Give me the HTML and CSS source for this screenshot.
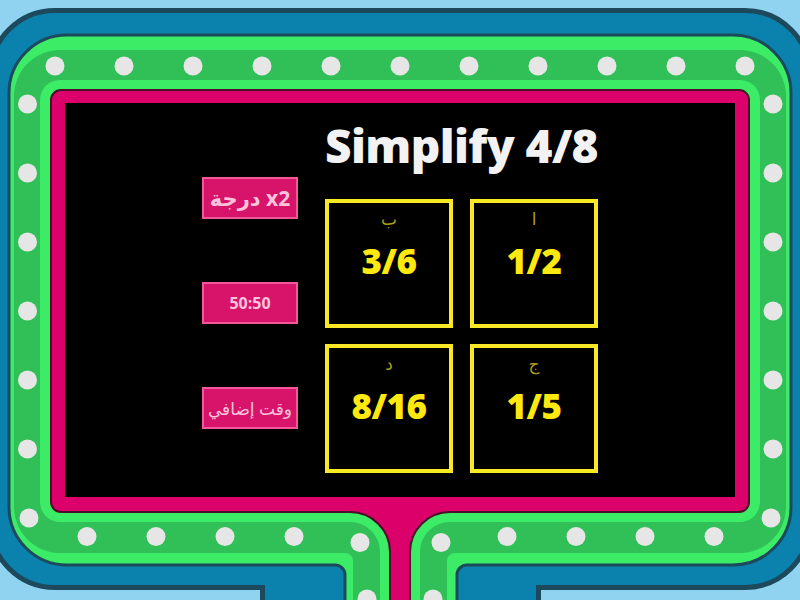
FILE: index.html
```html
<!DOCTYPE html>
<html lang="ar">
<head>
<meta charset="utf-8">
<title>Simplify 4/8</title>
<link rel="stylesheet" href="styles.css">
</head>
<body>
<div class="stage">
  <svg class="frame" viewBox="0 0 800 600" width="800" height="600" aria-hidden="true">
    <rect x="0" y="0" width="800" height="600" fill="#8fd3f1"/>
    <rect x="-10" y="10.5" width="820" height="577" rx="65" fill="#0b82ad" stroke="#1c4a5c" stroke-width="5"/>
    <rect x="262.5" y="587.5" width="276" height="40" fill="#0b82ad" stroke="#1c4a5c" stroke-width="5"/>
    <rect x="265" y="575" width="271" height="40" fill="#0b82ad"/>
    <path d="M67,35 H733 A58,58 0 0 1 791,93 V507 A58,58 0 0 1 733,565 H467 A10,10 0 0 0 457,575 V620 H345 V575 A10,10 0 0 0 335,565 H67 A58,58 0 0 1 9,507 V93 A58,58 0 0 1 67,35 Z" fill="#3cec67" stroke="#1c4a5c" stroke-width="3"/>
    <path d="M60,50 H740 A46,46 0 0 1 786,96 V507 A46,46 0 0 1 740,553 H455 A8,8 0 0 0 447,561 V620 H353 V561 A8,8 0 0 0 345,553 H60 A46,46 0 0 1 14,507 V96 A46,46 0 0 1 60,50 Z" fill="#31bf57"/>
    <path d="M60,80 H740 A20,20 0 0 1 760,100 V502 A20,20 0 0 1 740,522 H450 A30,30 0 0 0 420,552 V620 H380 V552 A30,30 0 0 0 350,522 H60 A20,20 0 0 1 40,502 V100 A20,20 0 0 1 60,80 Z" fill="#3cec67"/>
    <path d="M61,90 H739 A10,10 0 0 1 749,100 V502 A10,10 0 0 1 739,512 H450 A40,40 0 0 0 410,552 V620 H390 V552 A40,40 0 0 0 350,512 H61 A10,10 0 0 1 51,502 V100 A10,10 0 0 1 61,90 Z" fill="#dc006a" stroke="#4a1028" stroke-width="2"/>
    <rect x="65" y="103" width="670" height="394" fill="#000"/>
    <g fill="#e6e6e6">
      <circle cx="55" cy="66" r="9.5"/><circle cx="124" cy="66" r="9.5"/><circle cx="193" cy="66" r="9.5"/>
      <circle cx="262" cy="66" r="9.5"/><circle cx="331" cy="66" r="9.5"/><circle cx="400" cy="66" r="9.5"/>
      <circle cx="469" cy="66" r="9.5"/><circle cx="538" cy="66" r="9.5"/><circle cx="607" cy="66" r="9.5"/>
      <circle cx="676" cy="66" r="9.5"/><circle cx="745" cy="66" r="9.5"/>
      <circle cx="27.5" cy="104" r="9.5"/><circle cx="27.5" cy="173" r="9.5"/><circle cx="27.5" cy="242" r="9.5"/>
      <circle cx="27.5" cy="311" r="9.5"/><circle cx="27.5" cy="380" r="9.5"/><circle cx="27.5" cy="449" r="9.5"/>
      <circle cx="29" cy="518" r="9.5"/>
      <circle cx="773" cy="104" r="9.5"/><circle cx="773" cy="173" r="9.5"/><circle cx="773" cy="242" r="9.5"/>
      <circle cx="773" cy="311" r="9.5"/><circle cx="773" cy="380" r="9.5"/><circle cx="773" cy="449" r="9.5"/>
      <circle cx="771" cy="518" r="9.5"/>
      <circle cx="87" cy="536.5" r="9.5"/><circle cx="156" cy="536.5" r="9.5"/><circle cx="225" cy="536.5" r="9.5"/>
      <circle cx="294" cy="536.5" r="9.5"/><circle cx="360" cy="542.5" r="9.5"/><circle cx="367" cy="599" r="9.5"/>
      <circle cx="507" cy="536.5" r="9.5"/><circle cx="576" cy="536.5" r="9.5"/><circle cx="645" cy="536.5" r="9.5"/>
      <circle cx="714" cy="536.5" r="9.5"/><circle cx="441" cy="542.5" r="9.5"/><circle cx="433" cy="599" r="9.5"/>
    </g>
  </svg>
  <div class="content">
    <div class="lifelines">
      <div class="lifeline lifeline-big" dir="rtl">x2 درجة</div>
      <div class="lifeline lifeline-small">50:50</div>
      <div class="lifeline lifeline-mid" dir="rtl">وقت إضافي</div>
    </div>
    <div class="main">
      <h1 class="title">Simplify 4/8</h1>
      <div class="answers">
        <div class="answer"><span class="label">ب</span><span class="value">3/6</span></div>
        <div class="answer"><span class="label">ا</span><span class="value">1/2</span></div>
        <div class="answer"><span class="label">د</span><span class="value">8/16</span></div>
        <div class="answer"><span class="label">ج</span><span class="value">1/5</span></div>
      </div>
    </div>
  </div>
</div>
</body>
</html>
```

FILE: styles.css
```css
body {
  margin: 0;
  background: #8fd3f1;
}

.stage {
  display: grid;
  width: 800px;
  height: 600px;
  overflow: hidden;
}

.frame,
.content {
  grid-area: 1 / 1;
}

.frame {
  display: block;
}

.content {
  display: flex;
  align-items: flex-start;
  padding-left: 202px;
}

.lifelines {
  display: flex;
  flex-direction: column;
  gap: 63px;
  padding-top: 177px;
}

.lifeline {
  box-sizing: border-box;
  width: 96px;
  height: 42px;
  border: 2px solid #f2589a;
  background: #d7136a;
  color: #ffc3dc;
  display: flex;
  align-items: center;
  justify-content: center;
  font-family: "Open Sans", "DejaVu Sans", sans-serif;
  white-space: nowrap;
}

.lifeline-big {
  font-size: 21px;
  font-weight: 700;
}

.lifeline-small {
  font-size: 16px;
  font-weight: 700;
}

.lifeline-mid {
  font-size: 17px;
  font-weight: 400;
}

.main {
  margin-left: 27px;
  width: 273px;
  display: flex;
  flex-direction: column;
  align-items: center;
  padding-top: 122px;
}

.title {
  margin: 0 0 31px;
  font-family: "Open Sans", sans-serif;
  font-weight: 800;
  font-size: 46px;
  line-height: 46px;
  letter-spacing: -0.6px;
  color: #f2f2f2;
  white-space: nowrap;
}

.answers {
  display: grid;
  grid-template-columns: 128px 128px;
  grid-auto-rows: 129px;
  column-gap: 17px;
  row-gap: 16px;
}

.answer {
  box-sizing: border-box;
  border: 4px solid #f9e824;
  display: flex;
  flex-direction: column;
  align-items: center;
  padding-top: 6px;
}

.label {
  font-family: "DejaVu Sans", sans-serif;
  font-size: 17px;
  line-height: 20px;
  color: #a89e1c;
}

.value {
  margin-top: 12px;
  font-family: "Open Sans", sans-serif;
  font-weight: 800;
  font-size: 35px;
  line-height: 40px;
  letter-spacing: -0.5px;
  color: #fde90f;
}
```
